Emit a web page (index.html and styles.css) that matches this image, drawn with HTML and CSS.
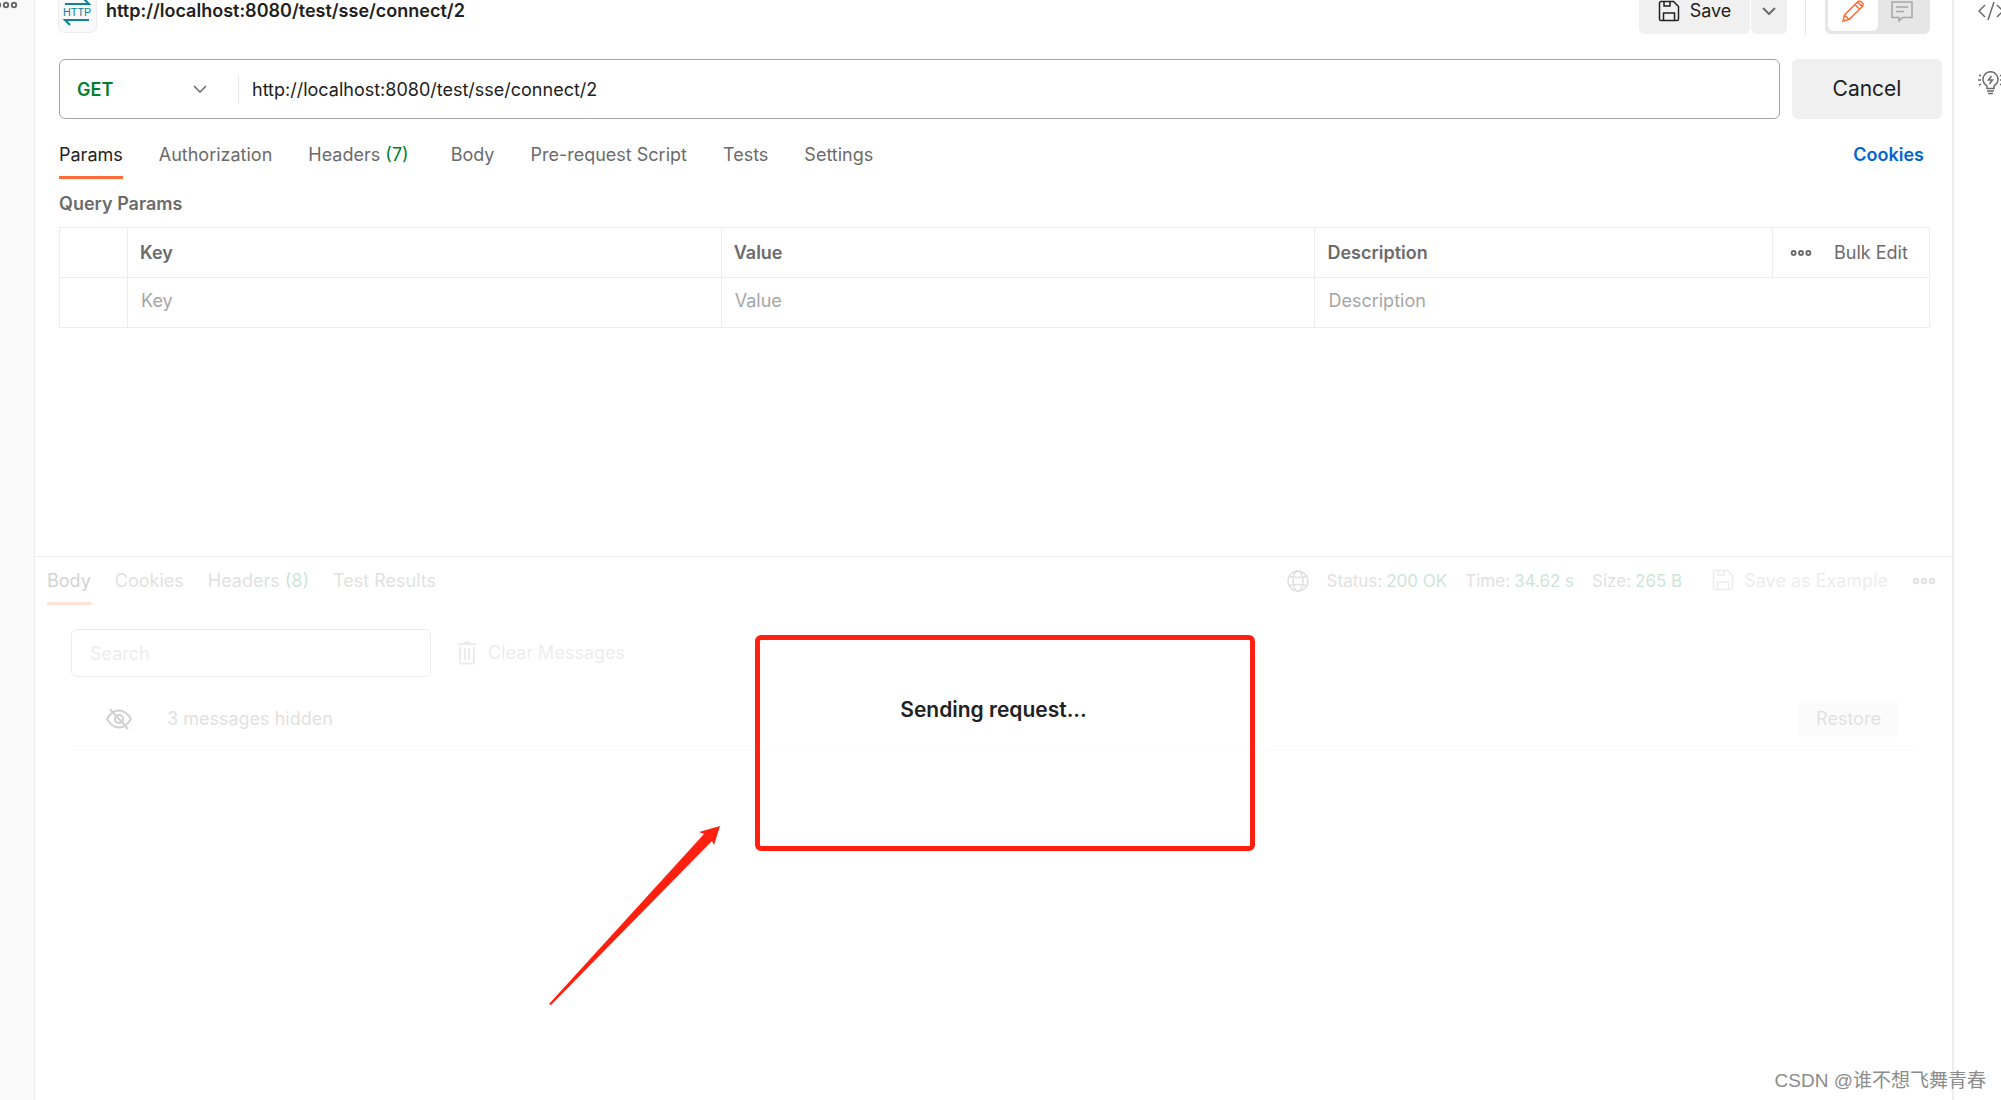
FILE: index.html
```html
<!DOCTYPE html>
<html lang="en">
<head>
<meta charset="utf-8">
<title>http://localhost:8080/test/sse/connect/2</title>
<link rel="stylesheet" href="styles.css">
</head>
<body>
<svg class="defs" aria-hidden="true">
  <symbol id="floppy" viewBox="0 0 22 22"><path d="M1.5 3a1.5 1.5 0 0 1 1.5-1.500h12.500l5 5V19a1.500 1.500 0 0 1-1.500 1.500H3A1.500 1.500 0 0 1 1.500 19zM6 1.500V6h6V1.500M5.500 20.500V13h11v7.500"/></symbol>
  <symbol id="chevron" viewBox="0 0 14 8"><path d="M1 1l6 6 6-6"/></symbol>
  <symbol id="dots" viewBox="0 0 24 8"><circle cx="4" cy="4" r="2.200"/><circle cx="12" cy="4" r="2.200"/><circle cx="20" cy="4" r="2.200"/></symbol>
</svg>
<aside class="rail rail-left">
  <button class="icon-button" aria-label="More"><svg class="icon dots" width="24" height="8"><use href="#dots"/></svg></button>
</aside>
<main class="workspace">
  <section class="request">
    <header class="title-bar">
      <span class="http-badge">
        <svg width="37" height="42" viewBox="0 0 37 42" role="img" aria-label="HTTP request">
          <path class="http-arrows" d="M6 14h24l-5-5M30 30H6l5 5"/>
          <text class="http-text" x="18" y="26" text-anchor="middle">HTTP</text>
        </svg>
      </span>
      <h1 class="request-name">http://localhost:8080/test/sse/connect/2</h1>
      <div class="split-button">
        <button class="save-main"><svg class="icon" width="22" height="22"><use href="#floppy"/></svg>Save</button>
        <button class="save-more" aria-label="Save options"><svg class="icon muted" width="14" height="8"><use href="#chevron"/></svg></button>
      </div>
      <span class="bar-divider"></span>
      <div class="mode-toggle">
        <button class="mode active" aria-label="Edit">
          <svg class="icon orange" width="22" height="22" viewBox="0 0 22 22"><path d="M1 21l1.500-6L15.500 2a2.500 2.500 0 0 1 1.500-.800h1.500l2.500 2.500v1.500a2.500 2.500 0 0 1-.800 1.500L7 19.500zM2.500 15L7 19.500M13 4.500L17.500 9M15.500 2L20 6.500"/></svg>
        </button>
        <button class="mode" aria-label="Comments">
          <svg class="icon pale" width="22" height="22" viewBox="0 0 22 22"><path d="M1 2h20v15.500h-9.500L8 21v-3.500H1zM5 7h12M5 11.500h8"/></svg>
        </button>
      </div>
    </header>
    <form class="url-row">
      <div class="url-box">
        <div class="method">
          <select class="method-select" aria-label="Method"><option>GET</option></select>
          <svg class="icon muted method-chevron" width="14" height="8"><use href="#chevron"/></svg>
        </div>
        <input class="url-input" type="text" aria-label="Request URL" value="http://localhost:8080/test/sse/connect/2">
      </div>
      <button class="cancel" type="button">Cancel</button>
    </form>
    <nav class="tabs">
      <a class="tab active" href="#">Params</a>
      <a class="tab" href="#">Authorization</a>
      <a class="tab counted" href="#">Headers <span class="count">(7)</span></a>
      <a class="tab" href="#">Body</a>
      <a class="tab" href="#">Pre-request Script</a>
      <a class="tab" href="#">Tests</a>
      <a class="tab" href="#">Settings</a>
      <a class="cookies" href="#">Cookies</a>
    </nav>
    <h2 class="section-title">Query Params</h2>
    <table class="params">
      <colgroup><col class="col-check"><col class="col-key"><col class="col-key"><col><col class="col-actions"></colgroup>
      <thead>
        <tr>
          <th></th><th>Key</th><th>Value</th><th>Description</th>
          <th><div class="actions"><button class="icon-button" aria-label="Columns"><svg class="icon dots" width="22" height="8"><use href="#dots"/></svg></button><button class="bulk">Bulk Edit</button></div></th>
        </tr>
      </thead>
      <tbody>
        <tr>
          <td></td>
          <td><input class="cell-input" type="text" placeholder="Key" aria-label="Key"></td>
          <td><input class="cell-input" type="text" placeholder="Value" aria-label="Value"></td>
          <td colspan="2"><input class="cell-input" type="text" placeholder="Description" aria-label="Description"></td>
        </tr>
      </tbody>
    </table>
  </section>
  <section class="response">
    <div class="faded">
      <div class="response-bar">
        <nav class="response-tabs">
          <a class="tab active" href="#">Body</a>
          <a class="tab" href="#">Cookies</a>
          <a class="tab" href="#">Headers <span class="count">(8)</span></a>
          <a class="tab" href="#">Test Results</a>
        </nav>
        <svg class="icon muted globe" width="22" height="22" viewBox="0 0 22 22"><circle cx="11" cy="11" r="10"/><ellipse cx="11" cy="11" rx="5" ry="10"/><path d="M2.500 6.500q8.500 2 17 0M2.500 15.500q8.500-2 17 0"/></svg>
        <dl class="stats">
          <div class="stat"><dt>Status:</dt><dd>200 OK</dd></div>
          <div class="stat"><dt>Time:</dt><dd>34.62 s</dd></div>
          <div class="stat"><dt>Size:</dt><dd>265 B</dd></div>
        </dl>
        <button class="save-example"><svg class="icon" width="22" height="22"><use href="#floppy"/></svg>Save as Example</button>
        <button class="icon-button" aria-label="More actions"><svg class="icon dots" width="24" height="8"><use href="#dots"/></svg></button>
      </div>
      <div class="filter-row">
        <input class="search" type="text" placeholder="Search" aria-label="Search messages">
        <button class="clear"><svg class="icon" width="20" height="24" viewBox="0 0 20 24"><path d="M1 3h18M7 1.500h6M3 6v15.500a1 1 0 0 0 1 1h12a1 1 0 0 0 1-1V6M8 7v12M12 7v12"/></svg>Clear Messages</button>
      </div>
      <div class="hidden-row">
        <svg class="icon" width="26" height="22" viewBox="0 0 26 22"><path d="M1 11Q6 2.500 13 2.500T25 11Q20 19.500 13 19.500T1 11zM4 1l18 20"/><circle cx="13" cy="11" r="4"/></svg>
        <span class="hidden-text">3 messages hidden</span>
        <button class="restore">Restore</button>
      </div>
    </div>
    <p class="sending" role="status">Sending request...</p>
    <div class="mark-box"></div>
    <svg class="mark-arrow" width="172" height="180" viewBox="0 0 172 180"><path d="M0 178L155 8 150 6 171 0 165 19 163 15 2 179z"/></svg>
  </section>
</main>
<aside class="rail rail-right">
  <button class="icon-button" aria-label="Code"><svg class="icon" width="26" height="22" viewBox="0 0 26 22"><path d="M7 5l-6 6 6 6M16 2l-6 18M19 5l6 6-6 6"/></svg></button>
  <button class="icon-button" aria-label="Tips"><svg class="icon" width="28" height="26" viewBox="0 0 28 26"><path d="M9 18.500v-2.500a7.500 7.500 0 1 1 7 0v2.500zM9 21h7M10 23.500h5M13.500 6l-3 4h4l-3 4M1 5l2 .800M0 10h3M1 15l2-.800M24 5l-2 .800M25 10h-3M24 15l-2-.800"/></svg></button>
</aside>
<p class="watermark">CSDN @谁不想飞舞青春</p>
</body>
</html>
```
FILE: styles.css
```css
* { box-sizing: border-box; }

body {
  display: flex;
  min-height: 100vh;
  margin: 0;
  overflow: hidden;
  position: relative;
  background: #fff;
  color: #212121;
  font: 18px/24px Inter, "Noto Sans CJK SC", sans-serif;
}

button, input, select {
  margin: 0;
  padding: 0;
  border: 0;
  background: none;
  color: inherit;
  font: inherit;
}

button { cursor: pointer; }
a { text-decoration: none; }
h1, h2, p, dl, dd { margin: 0; }

.defs { position: absolute; width: 0; height: 0; }

.icon {
  flex: none;
  display: block;
  fill: none;
  stroke: currentColor;
  stroke-width: 2;
}

.muted, .dots { color: #6b6b6b; }
.pale { color: #a6a6a6; stroke-width: 1.5; }
.orange { color: #ff6c37; stroke-width: 1.5; }
.icon-button { display: flex; }

.rail { flex: none; display: flex; flex-direction: column; }

.rail-left {
  width: 35px;
  padding-top: 1px;
  align-items: flex-end;
  padding-right: 16px;
  background: #f9f9f9;
  border-right: 1px solid #ededed;
}

.rail-right {
  width: 49px;
  align-items: flex-start;
  gap: 48px;
  padding-left: 24px;
  border-left: 2px solid #ededed;
  color: #6b6b6b;
}

.rail-right .icon { stroke-width: 1.5; }

.workspace {
  flex: 1;
  min-width: 0;
  display: flex;
  flex-direction: column;
}

.request {
  min-height: 569px;
  margin-top: -12px;
  padding: 0 22px 0 24px;
  border-bottom: 1px solid #ededed;
}

.title-bar { display: flex; align-items: center; height: 46px; }

.http-badge {
  height: 42px;
  margin-right: 10px;
  border-radius: 6px;
  background: #f9f9f9;
  box-shadow: 0 0 0 1px #ededed;
}

.http-badge svg { display: block; }
.http-arrows { fill: none; stroke: #0f8394; stroke-width: 2; }
.http-text { fill: #0f8394; font: 11px "Liberation Sans Narrow", Roboto, sans-serif; }

.request-name {
  flex: 1;
  font-size: 18px;
  font-weight: 600;
}

.split-button { display: flex; gap: 1px; height: 46px; }

.save-main, .save-more {
  display: flex;
  align-items: center;
  justify-content: center;
  background: #f0f0f0;
}

.save-main { width: 111px; gap: 10px; border-radius: 6px; }
.save-more { width: 36px; border-radius: 6px; }
.save-main .icon { stroke-width: 1.5; }

.bar-divider {
  width: 1px;
  height: 46px;
  margin: 0 19px 0 18px;
  background: #e6e6e6;
}

.mode-toggle {
  display: flex;
  width: 105px;
  height: 46px;
  padding: 3px;
  border-radius: 6px;
  background: #e6e6e6;
}

.mode {
  flex: 1;
  display: flex;
  align-items: center;
  justify-content: center;
  border-radius: 6px;
}

.mode.active { background: #fff; }

.url-row {
  display: flex;
  gap: 12px;
  margin: 25px -12px 0 0;
  height: 60px;
}

.url-box {
  flex: 1;
  display: flex;
  align-items: center;
  border: 1px solid #a6a6a6;
  border-radius: 6px;
}

.method {
  position: relative;
  width: 179px;
  border-right: 1px solid #e6e6e6;
}

.method-select {
  display: block;
  appearance: none;
  width: 100%;
  height: 28px;
  padding: 1px 0 0 17px;
  color: #007f31;
  font-weight: 600;
}

.method-chevron { position: absolute; right: 31px; top: 10px; stroke-width: 1.5; pointer-events: none; }
.url-input { flex: 1; height: 56px; padding: 0 13px; }

.cancel {
  width: 150px;
  border-radius: 6px;
  background: #f0f0f0;
  font-size: 21px;
}

.tabs { display: flex; gap: 36px; padding-top: 24px; }

.tab {
  display: block;
  height: 36px;
  color: #6b6b6b;
  white-space: nowrap;
}

.tab.active { color: #212121; border-bottom: 3px solid #ff6c37; }
.tab.counted { padding-right: 6px; }
.count { color: #007f31; }

.cookies {
  margin-left: auto;
  padding-right: 6px;
  color: #0265d2;
  font-weight: 600;
}

.section-title {
  margin: 13px 0 11px;
  color: #6b6b6b;
  font-size: 18px;
  font-weight: 600;
}

.params {
  width: 100%;
  table-layout: fixed;
  border-collapse: collapse;
  color: #6b6b6b;
}

.col-check { width: 68px; }
.col-key { width: 31.75%; }
.col-actions { width: 157px; }

.params th, .params td {
  height: 50px;
  padding: 0 12px;
  border: 1px solid #ededed;
  text-align: left;
  font-weight: 600;
}

.params td { padding: 0 13px; font-weight: 400; }
.actions { display: flex; align-items: center; gap: 22px; padding-left: 5px; }
.bulk { font-weight: 400; white-space: nowrap; }
.cell-input { display: block; width: 100%; height: 40px; margin-bottom: 4px; }
.cell-input::placeholder, .search::placeholder { color: #a6a6a6; opacity: 1; }

.response { flex: 1; position: relative; }
.faded { opacity: 0.2; }

.response-bar {
  display: flex;
  padding: 12px 16px 0 12px;
  height: 48px;
  align-items: flex-start;
}

.response-tabs { display: flex; gap: 24px; margin-right: auto; }
.globe { margin: 1px 18px 0 0; stroke-width: 1.5; }
.stats { display: flex; gap: 18px; font-size: 17px; }
.stat { display: flex; gap: 4px; white-space: nowrap; }
.stat dt { color: #6b6b6b; }
.stat dd { color: #007f31; }

.save-example {
  display: flex;
  gap: 10px;
  margin: 0 24px 0 30px;
  color: #a6a6a6;
  white-space: nowrap;
}

.save-example .icon { stroke-width: 1.5; }
.response-bar .icon-button { padding-top: 8px; }

.filter-row {
  display: flex;
  align-items: center;
  gap: 26px;
  padding: 24px 36px 0;
}

.search {
  width: 360px;
  height: 48px;
  padding: 0 18px;
  border: 1px solid #a6a6a6;
  border-radius: 6px;
}

.clear { display: flex; align-items: center; gap: 11px; color: #a6a6a6; }

.hidden-row {
  display: flex;
  align-items: center;
  height: 74px;
  margin: 0 35px 0 36px;
  padding: 10px 18px 0 35px;
  border-bottom: 1px solid #e6e6e6;
}

.hidden-text { margin: 0 auto 0 35px; color: #6b6b6b; }

.restore {
  width: 101px;
  height: 36px;
  border-radius: 6px;
  background: #f0f0f0;
  color: #6b6b6b;
}

.sending {
  position: absolute;
  top: 141px;
  left: 0;
  right: 0;
  text-align: center;
  font-size: 21px;
  font-weight: 600;
}

.mark-box {
  position: absolute;
  left: 720px;
  top: 78px;
  width: 500px;
  height: 216px;
  border: 5px solid #ff2010;
  border-radius: 6px;
}

.mark-arrow {
  position: absolute;
  left: 514px;
  top: 269px;
  fill: #ff2010;
}

.watermark {
  position: absolute;
  right: 15px;
  bottom: 7px;
  color: #8c8c8c;
  font: 19px/24px "Liberation Sans", "Noto Sans CJK SC", sans-serif;
}
```
